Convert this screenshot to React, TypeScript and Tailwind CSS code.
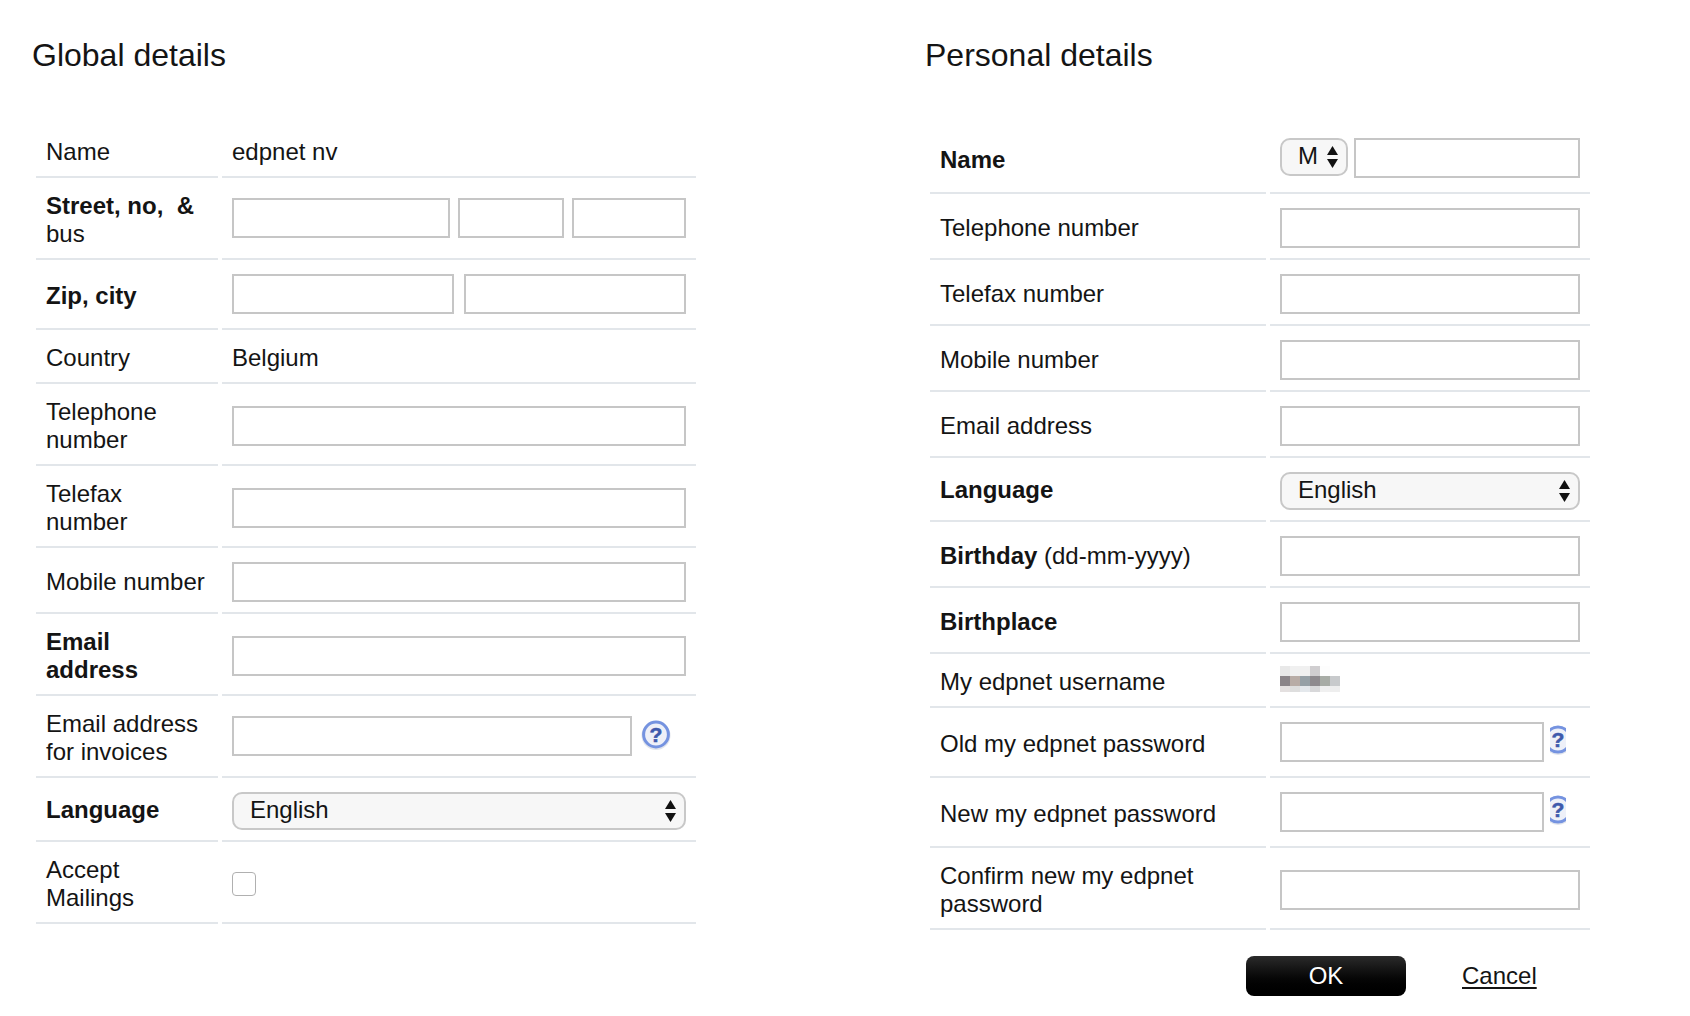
/**
 * Account details page.
 * Two forms side by side: global details of the customer and personal details of the user.
 */

import type { ReactNode } from "react";


// --- Constants ---

const USERNAME_PIXELS = [
    ["#e8e8e8", "#f0f0f0", "#f0f0f0", "#d0ced0", "#fdfdfd", "#ffffff"],
    ["#8a8488", "#b8aca6", "#96a0a6", "#8e8a8e", "#a8aca6", "#c8cacc"],
    ["#e4e0e0", "#dedede", "#e4e8ec", "#d8d8da", "#f0f0f0", "#eeeeee"],
];


// --- Small parts ---

function TextInput({ className }: { className: string })
{
    return <input type="text" className={`block h-10 shrink-0 border-2 border-[#c6c6c6] bg-white ${className}`} />;
}

function SelectArrows()
{
    return (
        <svg viewBox="0 0 11 22" className="h-[22px] w-[11px] shrink-0" fill="#111111">
            <path d="M5.5 0 L11 9 L0 9 Z" />
            <path d="M5.5 22 L11 13 L0 13 Z" />
        </svg>
    );
}

function SelectBox({ value, className }: { value: string; className: string })
{
    return (
        <div className={`flex h-[38px] items-center rounded-[10px] border-2 border-[#c8c8c8] bg-[#f7f7f7] ${className}`}>
            <span className="flex-1 pb-[2px]">{value}</span>
            <SelectArrows />
        </div>
    );
}

function HelpIcon()
{
    return (
        <svg viewBox="0 0 30 30" className="h-[30px] w-[30px] shrink-0">
            <circle cx="15" cy="15.5" r="14.5" fill="#e2e5ec" />
            <circle cx="15" cy="14.5" r="12.4" fill="#eef0f8" stroke="#7593e0" strokeWidth="3" />
            <text x="15" y="22" textAnchor="middle" fontSize="21" fontWeight="700" fill="#3f59ac" stroke="#3f59ac" strokeWidth="0.6" fontFamily="Liberation Sans, sans-serif">?</text>
        </svg>
    );
}

function ClippedHelpIcon()
{
    return (
        <div className="ml-[6px] mt-[3px] flex h-[30px] w-4 justify-center overflow-hidden">
            <HelpIcon />
        </div>
    );
}

function UsernameBlur()
{
    return (
        <div className="mt-3">
            {USERNAME_PIXELS.map((row, rowIndex) => (
                <div key={rowIndex} className="flex h-[10px] last:h-[6px]">
                    {row.map((color, colIndex) => (
                        <div key={colIndex} className="w-[10px]" style={{ backgroundColor: color }} />
                    ))}
                </div>
            ))}
        </div>
    );
}

/**
 * One form row: a label cell and a value cell, both with a line below.
 */
function Row({ height, labelWidth, labelTop, valueTop, label, children }: {
    height: string;
    labelWidth: string;
    labelTop: string;
    valueTop: string;
    label: ReactNode;
    children?: ReactNode;
})
{
    return (
        <div className={`flex gap-1 ${height}`}>
            <div className={`shrink-0 border-b-2 border-[#e2e6ea] pl-[10px] ${labelWidth} ${labelTop}`}>
                {label}
            </div>
            <div className={`flex-1 border-b-2 border-[#e2e6ea] pl-[10px] ${valueTop}`}>
                {children}
            </div>
        </div>
    );
}


// --- Sections ---

function GlobalDetails()
{
    const tLabel = "w-[182px]";

    return (
        <section className="w-[894px] shrink-0 pl-[32px]">
            <h2 className="mb-[49px] mt-[1px] text-[32px] leading-10">Global details</h2>

            <div className="ml-[4px] w-[660px]">
                <Row height="h-[54px]" labelWidth={tLabel} labelTop="pt-[14px]" valueTop="pt-[14px]" label="Name">
                    edpnet nv
                </Row>
                <Row height="h-[82px]" labelWidth={tLabel} labelTop="pt-[14px]" valueTop="pt-5" label={<><b>Street, no,&nbsp; &amp;</b> bus</>}>
                    <div className="flex">
                        <TextInput className="w-[218px]" />
                        <TextInput className="ml-2 w-[106px]" />
                        <TextInput className="ml-2 w-[114px]" />
                    </div>
                </Row>
                <Row height="h-[70px]" labelWidth={tLabel} labelTop="pt-[22px]" valueTop="pt-[14px]" label={<b>Zip, city</b>}>
                    <div className="flex gap-[10px]">
                        <TextInput className="w-[222px]" />
                        <TextInput className="w-[222px]" />
                    </div>
                </Row>
                <Row height="h-[54px]" labelWidth={tLabel} labelTop="pt-[14px]" valueTop="pt-[14px]" label="Country">
                    Belgium
                </Row>
                <Row height="h-[82px]" labelWidth={tLabel} labelTop="pt-[14px]" valueTop="pt-[22px]" label="Telephone number">
                    <TextInput className="w-[454px]" />
                </Row>
                <Row height="h-[82px]" labelWidth={tLabel} labelTop="pt-[14px]" valueTop="pt-[22px]" label={<>Telefax<br />number</>}>
                    <TextInput className="w-[454px]" />
                </Row>
                <Row height="h-[66px]" labelWidth={tLabel} labelTop="pt-5" valueTop="pt-[14px]" label="Mobile number">
                    <TextInput className="w-[454px]" />
                </Row>
                <Row height="h-[82px]" labelWidth={tLabel} labelTop="pt-[14px]" valueTop="pt-[22px]" label={<b>Email<br />address</b>}>
                    <TextInput className="w-[454px]" />
                </Row>
                <Row height="h-[82px]" labelWidth={tLabel} labelTop="pt-[14px]" valueTop="pt-5" label={<>Email address<br />for invoices</>}>
                    <div className="flex">
                        <TextInput className="w-[400px]" />
                        <div className="ml-[9px] mt-1"><HelpIcon /></div>
                    </div>
                </Row>
                <Row height="h-[64px]" labelWidth={tLabel} labelTop="pt-[18px]" valueTop="pt-[14px]" label={<b>Language</b>}>
                    <SelectBox value="English" className="w-[454px] pl-4 pr-2" />
                </Row>
                <Row height="h-[82px]" labelWidth={tLabel} labelTop="pt-[14px]" valueTop="pt-[30px]" label={<>Accept<br />Mailings</>}>
                    <div className="h-6 w-6 rounded-[4px] border border-[#b0b0b0] bg-white" />
                </Row>
            </div>
        </section>
    );
}

function PersonalDetails()
{
    const tLabel = "w-[336px]";

    return (
        <section className="pl-[31px]">
            <h2 className="mb-[49px] mt-[1px] text-[32px] leading-10">Personal details</h2>

            <div className="ml-[5px] w-[660px]">
                <Row height="h-[70px]" labelWidth={tLabel} labelTop="pt-[22px]" valueTop="pt-[14px]" label={<b>Name</b>}>
                    <div className="flex">
                        <SelectBox value="M" className="w-[68px] pl-4 pr-2" />
                        <TextInput className="ml-[6px] w-[226px]" />
                    </div>
                </Row>
                <Row height="h-[66px]" labelWidth={tLabel} labelTop="pt-5" valueTop="pt-[14px]" label="Telephone number">
                    <TextInput className="w-[300px]" />
                </Row>
                <Row height="h-[66px]" labelWidth={tLabel} labelTop="pt-5" valueTop="pt-[14px]" label="Telefax number">
                    <TextInput className="w-[300px]" />
                </Row>
                <Row height="h-[66px]" labelWidth={tLabel} labelTop="pt-5" valueTop="pt-[14px]" label="Mobile number">
                    <TextInput className="w-[300px]" />
                </Row>
                <Row height="h-[66px]" labelWidth={tLabel} labelTop="pt-5" valueTop="pt-[14px]" label="Email address">
                    <TextInput className="w-[300px]" />
                </Row>
                <Row height="h-[64px]" labelWidth={tLabel} labelTop="pt-[18px]" valueTop="pt-[14px]" label={<b>Language</b>}>
                    <SelectBox value="English" className="w-[300px] pl-4 pr-2" />
                </Row>
                <Row height="h-[66px]" labelWidth={tLabel} labelTop="pt-5" valueTop="pt-[14px]" label={<><b>Birthday</b> (dd-mm-yyyy)</>}>
                    <TextInput className="w-[300px]" />
                </Row>
                <Row height="h-[66px]" labelWidth={tLabel} labelTop="pt-5" valueTop="pt-[14px]" label={<b>Birthplace</b>}>
                    <TextInput className="w-[300px]" />
                </Row>
                <Row height="h-[54px]" labelWidth={tLabel} labelTop="pt-[14px]" valueTop="pt-0" label="My edpnet username">
                    <UsernameBlur />
                </Row>
                <Row height="h-[70px]" labelWidth={tLabel} labelTop="pt-[22px]" valueTop="pt-[14px]" label="Old my edpnet password">
                    <div className="flex">
                        <TextInput className="w-[264px]" />
                        <ClippedHelpIcon />
                    </div>
                </Row>
                <Row height="h-[70px]" labelWidth={tLabel} labelTop="pt-[22px]" valueTop="pt-[14px]" label="New my edpnet password">
                    <div className="flex">
                        <TextInput className="w-[264px]" />
                        <ClippedHelpIcon />
                    </div>
                </Row>
                <Row height="h-[82px]" labelWidth={tLabel} labelTop="pt-[14px]" valueTop="pt-[22px]" label={<>Confirm new my edpnet<br />password</>}>
                    <TextInput className="w-[300px]" />
                </Row>

                {/* 버튼 영역 */}
                <div className="mt-[26px] ml-[316px] flex items-center">
                    <button className="h-10 w-[160px] rounded-lg bg-gradient-to-b from-[#2b2b2b] to-black text-white">
                        OK
                    </button>
                    <a href="#" className="ml-14 underline decoration-2 underline-offset-[3px]">Cancel</a>
                </div>
            </div>
        </section>
    );
}


// --- Component ---

export default function App()
{
    return (
        <div className="flex min-h-screen bg-white pt-[34px] font-['Liberation_Sans',Arial,sans-serif] text-2xl leading-7 text-[#141414]">
            <GlobalDetails />
            <PersonalDetails />
        </div>
    );
}
